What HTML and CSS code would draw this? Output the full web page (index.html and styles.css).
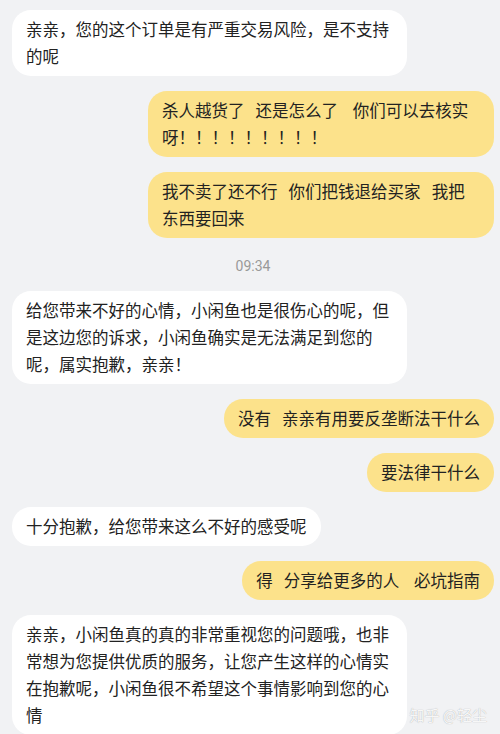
FILE: index.html
```html
<!DOCTYPE html>
<html>
<head>
    <meta charset="UTF-8">
    <title>聊天记录</title>
    <link rel="stylesheet" href="styles.css">
</head>
<body>

<div class="chat">

    <div class="msg left">亲亲，您的这个订单是有严重交易风险，是不支持的呢</div>

    <div class="msg right">杀人越货了   还是怎么了    你们可以去核实呀！！！！！！！！！</div>

    <div class="msg right">我不卖了还不行   你们把钱退给买家   我把东西要回来</div>

    <div class="time">09:34</div>

    <div class="msg left">给您带来不好的心情，小闲鱼也是很伤心的呢，但是这边您的诉求，小闲鱼确实是无法满足到您的呢，属实抱歉，亲亲！</div>

    <div class="msg right">没有   亲亲有用要反垄断法干什么</div>

    <div class="msg right">要法律干什么</div>

    <div class="msg left">十分抱歉，给您带来这么不好的感受呢</div>

    <div class="msg right">得   分享给更多的人    必坑指南</div>

    <div class="msg left">亲亲，小闲鱼真的真的非常重视您的问题哦，也非常想为您提供优质的服务，让您产生这样的心情实在抱歉呢，小闲鱼很不希望这个事情影响到您的心情</div>

</div>

<div class="mark">知乎 @轻尘</div>

</body>
</html>
```

FILE: styles.css
```css
* {
    margin: 0;
    padding: 0;
}

html, body {
    height: 100%;
    overflow: hidden;
}

body {
    background: #f1f2f4;
    font: 16.5px/27px "Noto Sans CJK SC", "Noto Sans", sans-serif;
    color: #222;
}

.chat {
    display: flex;
    flex-direction: column;
    gap: 15px;
    padding: 10px 6px 0 12px;
}

.msg {
    padding: 6px 14px;
    border-radius: 19px;
    white-space: pre-wrap;
    box-sizing: border-box;
}

.msg.left {
    align-self: flex-start;
    max-width: 395px;
    background: #fff;
}

.msg.right {
    align-self: flex-end;
    max-width: 346px;
    background: #fce28b;
}

.time {
    align-self: center;
    padding-top: 4px;
    font: 14px/19px Roboto, "Noto Sans", sans-serif;
    color: #999;
}

.mark {
    position: absolute;
    right: 13px;
    bottom: 9px;
    font: 15px/20px "Noto Sans CJK SC", sans-serif;
    color: rgba(255, 255, 255, 0.92);
    text-shadow: 0 0 1px rgba(0, 0, 0, 0.35);
}
```
